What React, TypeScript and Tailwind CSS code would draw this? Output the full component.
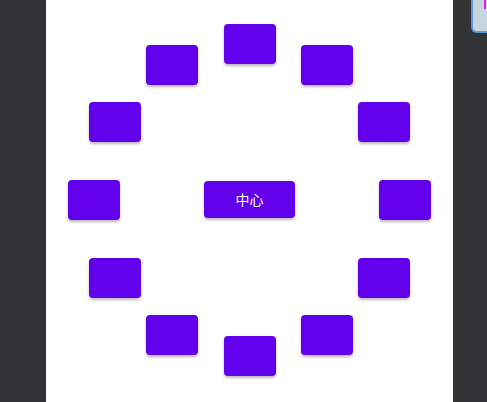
import React from 'react';

const RX = 155.5;
const RY = 156;
const CX = 203.5;
const CY = 200;
const BTN_W = 52;
const BTN_H = 40;

export default function App() {
  const items = Array.from({ length: 12 }, (_, i) => {
    const angle = (i * 30 * Math.PI) / 180;
    const x = CX + RX * Math.sin(angle);
    const y = CY - RY * Math.cos(angle);
    return { left: Math.round(x - BTN_W / 2), top: Math.round(y - BTN_H / 2) };
  });

  return (
    <div
      className="flex h-[402px] w-[487px] overflow-hidden bg-[#313335]"
      style={{ fontFamily: '"Noto Sans", "Noto Sans CJK SC", sans-serif' }}
    >
      <div className="w-[46px] shrink-0" />
      <div className="relative h-full w-[407px] shrink-0 bg-white">
        {items.map((p, i) => (
          <button
            key={i}
            className="absolute h-[40px] w-[52px] rounded-[4px] bg-[#6200ee] shadow-[0_2px_3px_rgba(0,0,0,0.28)]"
            style={{ left: p.left, top: p.top }}
          />
        ))}
        <button className="absolute left-[158px] top-[181px] flex h-[37px] w-[91px] items-center justify-center rounded-[4px] bg-[#6200ee] text-[14px] text-white shadow-[0_2px_3px_rgba(0,0,0,0.28)]">
          中心
        </button>
      </div>
      <div className="w-[18px] shrink-0" />
      <div className="relative h-[33px] w-[16px] shrink-0 rounded-bl-[6px] border-b-2 border-l-2 border-[#5b9bd5] bg-[#c8d5de]">
        <div className="absolute right-[1px] top-0 h-[9px] w-[2px] bg-[#e020e0]" />
      </div>
    </div>
  );
}
